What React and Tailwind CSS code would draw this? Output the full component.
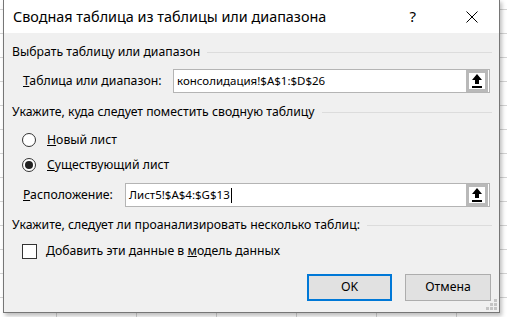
import React from 'react';

const font = { fontFamily: '"Noto Sans", "Open Sans", sans-serif' };

const UploadIcon = () => (
  <svg width="12" height="16" viewBox="0 0 12 16" fill="#000">
    <polygon points="6,1 11,7 8,7 8,11 4,11 4,7 1,7" />
    <rect x="1" y="13" width="10" height="2" />
  </svg>
);

const RefInput = ({ value, className, caret }) => (
  <div className={`flex h-[24px] items-center border border-[#b4b4b4] bg-white ${className}`}>
    <div className="flex flex-1 items-center pl-[3px] text-[11.5px] text-black">
      {value}
      {caret && <span className="ml-px inline-block h-[15px] w-px bg-black" />}
    </div>
    <div className="mr-px flex h-[22px] w-[22px] items-center justify-center border-[3px] border-[#b9b9b9] bg-white">
      <UploadIcon />
    </div>
  </div>
);

const Section = ({ children, className = '' }) => (
  <div className={`flex h-4 items-center ${className}`}>
    <span className="whitespace-nowrap text-[12.25px] text-black">{children}</span>
    <div className="ml-[7px] h-px flex-1 bg-[#dcdcdc]" />
  </div>
);

const Radio = ({ checked, children, className = '' }) => (
  <div className={`flex h-5 items-center pl-[10px] ${className}`}>
    <span className="flex h-[14px] w-[14px] items-center justify-center rounded-full border border-[#333] bg-white">
      {checked && <span className="h-[8px] w-[8px] rounded-full bg-[#222]" />}
    </span>
    <span className="ml-[11px] text-[12.25px] text-black">{children}</span>
  </div>
);

export default function App() {
  return (
    <div
      className="relative h-[317px] w-[507px] overflow-hidden bg-white bg-[repeating-linear-gradient(to_bottom,transparent_0px,transparent_9px,#d4d4d4_9px,#d4d4d4_10px,transparent_10px,transparent_24px),repeating-linear-gradient(to_right,transparent_0px,transparent_56px,#d4d4d4_56px,#d4d4d4_57px,transparent_57px,transparent_80px)]"
      style={font}
    >
      <div className="absolute left-[3px] top-[-1px] flex h-[314px] w-[497px] flex-col border border-[#767676] bg-[#f0f0f0] shadow-[2px_3px_4px_rgba(0,0,0,0.25)]">
        <div className="flex h-[33px] items-center bg-white pl-[9px]">
          <span className="text-[14.4px] text-black">Сводная таблица из таблицы или диапазона</span>
          <span className="ml-auto text-[15px] text-black">?</span>
          <svg className="ml-[50px] mr-[21px]" width="12" height="12" viewBox="0 0 12 12" stroke="#000" strokeWidth="1">
            <line x1="0.5" y1="0.5" x2="11.5" y2="11.5" />
            <line x1="11.5" y1="0.5" x2="0.5" y2="11.5" />
          </svg>
        </div>

        <div className="flex flex-col pl-[8px] pr-[7px]">
          <Section className="mt-[11px]">Выбрать таблицу или диапазон</Section>
          <div className="mt-[9px] flex items-center pl-[11px]">
            <span className="text-[12.25px] text-black">
              <span className="underline">Т</span>аблица или диапазон:
            </span>
            <RefInput className="ml-auto mr-[2px] w-[317px]" value="консолидация!$A$1:$D$26" />
          </div>

          <Section className="mt-[11px]">Укажите, куда следует поместить сводную таблицу</Section>
          <Radio className="mt-[10px]">
            <span className="underline">Н</span>овый лист
          </Radio>
          <Radio checked className="mt-[5px]">
            <span className="underline">С</span>уществующий лист
          </Radio>
          <div className="mt-[8px] flex items-center pl-[11px]">
            <span className="text-[12.25px] text-black">
              <span className="underline">Р</span>асположение:
            </span>
            <RefInput className="ml-auto mr-[2px] w-[365px]" value="Лист5!$A$4:$G$13" caret />
          </div>

          <Section className="mt-[10px]">Укажите, следует ли проанализировать несколько таблиц:</Section>
          <div className="mt-[8px] flex h-5 items-center pl-[10px]">
            <span className="h-[15px] w-[15px] border border-[#333] bg-white" />
            <span className="ml-[9px] text-[12.25px] text-black">
              Добавить эти данные в <span className="underline">м</span>одель данных
            </span>
          </div>

          <div className="mt-[13px] flex justify-end gap-[13px] pr-px">
            <button className="flex h-[27px] w-[85px] items-center justify-center border-2 border-[#0078d7] bg-[#e1e1e1] text-[12.25px] text-black">
              OK
            </button>
            <button className="flex h-[27px] w-[86px] items-center justify-center border border-[#adadad] bg-[#e1e1e1] text-[12.25px] text-black">
              Отмена
            </button>
          </div>
        </div>

        <svg className="absolute bottom-[1px] right-[1px]" width="12" height="12" viewBox="0 0 12 12" fill="#c4c4c4">
          <rect x="8" y="0" width="3" height="3" />
          <rect x="4" y="4" width="3" height="3" />
          <rect x="8" y="4" width="3" height="3" />
          <rect x="0" y="8" width="3" height="3" />
          <rect x="4" y="8" width="3" height="3" />
          <rect x="8" y="8" width="3" height="3" />
        </svg>
      </div>
    </div>
  );
}
